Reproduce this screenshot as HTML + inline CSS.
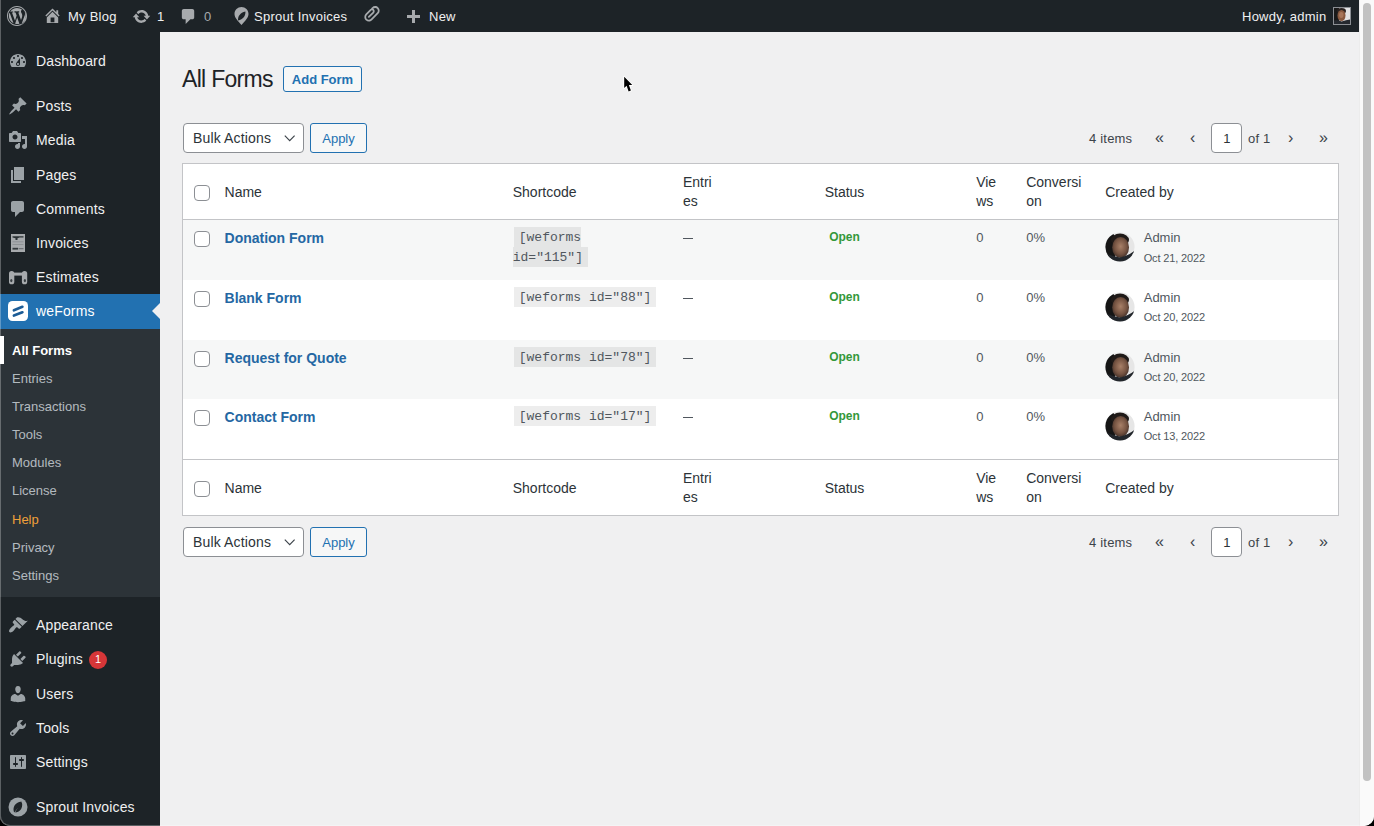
<!DOCTYPE html>
<html><head><meta charset="utf-8">
<style>
*{box-sizing:border-box;margin:0;padding:0}
html,body{width:1374px;height:826px;overflow:hidden;background:#000}
body{font-family:"Liberation Sans",sans-serif;font-size:13px;color:#3c434a;position:relative}
#win{position:absolute;left:0;top:0;width:1374px;height:826px;background:#f0f0f1;border-radius:0 0 10px 10px;overflow:hidden}
#bar{position:absolute;left:0;top:0;width:1359px;height:32px;background:#1d2327;color:#f0f0f1}
#bar .t{position:absolute;top:1px;line-height:32px;font-size:13px;color:#f0f0f1;white-space:nowrap;letter-spacing:.25px}
#bar .g{color:#a7aaad}
#bar svg{position:absolute;fill:#a7aaad}
#side{position:absolute;left:0;top:32px;width:160px;height:794px;background:#1d2327}
#sub{position:absolute;left:0;top:297px;width:160px;height:268px;background:#2c3338}
.mi{position:absolute;left:36px;font-size:14px;line-height:34px;height:34px;color:#f0f0f1;white-space:nowrap;letter-spacing:.15px}
.si{position:absolute;left:12px;font-size:13px;line-height:28px;height:28px;color:rgba(240,246,252,.7);white-space:nowrap}
#side svg{position:absolute;fill:rgba(240,246,252,.6)}
#edge{position:absolute;left:0;top:0;width:1374px;height:826px;border-left:1px solid rgba(255,255,255,.28);border-bottom:1px solid rgba(255,255,255,.28);border-radius:0 0 10px 10px;z-index:4;pointer-events:none}
#wbar{position:absolute;left:0;top:336px;width:4px;height:28px;background:#fff;z-index:5}
#sb{position:absolute;left:1359px;top:0;width:15px;height:826px;background:#fafafa;border-left:1px solid #ececec}
#thumb{position:absolute;left:1363px;top:3px;width:8px;height:778px;border-radius:4px;background:#c2c2c2}

#main{position:absolute;left:160px;top:32px;width:1199px;height:794px}
h1{position:absolute;left:22px;top:32px;font-size:23px;font-weight:400;line-height:30px;color:#1d2327;letter-spacing:-0.7px;white-space:nowrap}
.btn2{position:absolute;height:26px;border:1px solid #2271b1;border-radius:3px;background:#f6f7f7;color:#2271b1;font-size:13px;font-weight:600;line-height:26px;text-align:center}
.sel{position:absolute;width:121px;height:30px;border:1px solid #8c8f94;border-radius:4px;background:#fff;color:#2c3338;font-size:14px;line-height:28px;padding-left:9px;white-space:nowrap;letter-spacing:.15px}
.sel svg{position:absolute;right:7px;top:7.5px}
.apply{position:absolute;width:57px;height:30px;border:1px solid #2271b1;border-radius:3px;background:#f6f7f7;color:#2271b1;font-size:13px;line-height:30px;text-align:center}
.pg{position:absolute;white-space:nowrap;font-size:13px;color:#3c434a;line-height:32px;letter-spacing:.2px}
.pg .a{position:absolute;top:0;font-size:16px;line-height:30px;color:#3c434a}
.pg .box{position:absolute;top:0;width:31px;height:30px;border:1px solid #8c8f94;border-radius:4px;background:#fff;text-align:center;font-size:13px;line-height:29px;color:#2c3338;padding-left:1px}
table{position:absolute;left:22px;border-collapse:collapse;table-layout:fixed;background:#fff;border:1px solid #c3c4c7;font-size:13px}
th,td{text-align:left;vertical-align:top;padding:8px 10px}
th{font-size:14px;font-weight:400;color:#2c3338;line-height:18.5px;vertical-align:middle;padding:9px 10px 7px}
thead th{border-bottom:1px solid #c3c4c7}
tfoot th{border-top:1px solid #c3c4c7}
tbody tr:nth-child(odd){background:#f6f7f7}
.cb{display:inline-block;width:16px;height:16px;border:1px solid #8c8f94;border-radius:4px;background:#fff}

.nm{color:#2467a3;font-weight:600;font-size:14px;line-height:20px}
code{font-family:"Liberation Mono",monospace;font-size:13px;background:rgba(0,0,0,.07);padding:3px 5px 2px;margin:0 1px;line-height:20px;color:#50575e;vertical-align:top}
td{font-size:13px;line-height:20px;color:#50575e}
.open{color:#33983a;font-size:12px;font-weight:700;position:relative;top:-1px}
td:last-child{position:relative}
.av{position:absolute;left:10px;top:12px}
.who{position:absolute;left:48.5px;top:9px;font-size:13px;color:#50575e;line-height:18px}
.dt{position:absolute;left:48.5px;top:30.5px;font-size:11px;color:#50575e;line-height:14px;letter-spacing:-.15px}
.dash{display:inline-block;vertical-align:top;margin-top:10px;width:10px;height:1px;background:#50575e}
</style></head><body>
<div id="win">
<div id="bar">
  <svg style="left:7px;top:6px" width="20" height="20" viewBox="0 0 20 20"><path d="M20 10c0-5.52-4.48-10-10-10S0 4.48 0 10s4.48 10 10 10 10-4.48 10-10zM10 1.01c4.97 0 8.99 4.02 8.99 8.99s-4.02 8.99-8.99 8.99S1.01 14.97 1.01 10 5.03 1.01 10 1.01zM8.01 14.82L4.96 6.61c.49-.03 1.05-.08 1.05-.08.43-.05.38-1.01-.06-.99 0 0-1.29.1-2.13.1-.15 0-.33 0-.52-.01 1.44-2.17 3.9-3.6 6.7-3.6 2.09 0 3.99.79 5.41 2.09-.6-.08-1.450.35-1.45 1.42 0 .66.38 1.22.79 1.88.31.54.5 1.22.5 2.21 0 1.34-1.27 4.48-1.27 4.48l-2.71-7.5c.48-.03.75-.16.75-.16.43-.05.38-1.1-.05-1.08 0 0-1.3.11-2.14.11-.78 0-2.11-.11-2.11-.11-.43-.02-.48 1.06-.05 1.08l.84.08 1.12 3.04zm6.830 2.41l2.7-7.37s.48-1.21.48-1.94c0-.62-.05-1.45-.28-2.14.71 1.33 1.11 2.86 1.11 4.48 0 3.68-2.04 6.85-5.01 8.48zM2.68 6.77L6.5 17.25c-2.76-1.37-4.67-4.18-4.67-7.47 0-1.16.2-2.27.85-3.01zm7.45 4.74l2.28 6.15c-.72.23-1.450.36-2.22.36-.69 0-1.43-.1-2.08-.29z"/></svg>
  <svg style="left:42.5px;top:6px" width="19" height="19" viewBox="0 0 20 20"><path d="M16 8.5l1.53 1.53-1.06 1.06L10 4.62l-6.47 6.47-1.06-1.06L10 2.5l4 4v-2h2v4zm-6-2.46l6 5.99V18H4v-5.97zM12 17v-5H8v5h4z"/></svg>
  <span class="t" style="left:68px">My Blog</span>
  <svg style="left:132px;top:7px" width="19" height="19" viewBox="0 0 20 20"><path d="M10.2 3.28c3.53 0 6.43 2.61 6.92 6h2.08l-3.5 4-3.5-4h2.32c-.45-1.970-2.21-3.45-4.32-3.45-1.45 0-2.73.71-3.54 1.78L4.95 5.66C6.23 4.2 8.11 3.28 10.2 3.28zm-.4 13.44c-3.52 0-6.43-2.61-6.92-6H.8l3.5-4c1.17 1.33 2.33 2.67 3.5 4H5.48c.45 1.97 2.21 3.45 4.32 3.450 1.45 0 2.73-.71 3.54-1.78l1.71 1.95c-1.28 1.46-3.15 2.38-5.25 2.38z"/></svg>
  <span class="t" style="left:157px">1</span>
  <svg style="left:179px;top:7px" width="19" height="19" viewBox="0 0 20 20"><path d="M5 2h9c1.1 0 2 .9 2 2v7c0 1.1-.9 2-2 2h-2l-5 5v-5H5c-1.1 0-2-.9-2-2V4c0-1.1.9-2 2-2z"/></svg>
  <span class="t g" style="left:204px">0</span>
  <svg style="left:234px;top:7px" width="15" height="18" viewBox="0 0 14 18"><path fill-rule="evenodd" d="M7 0C3.1 0 0 3 0 6.9C0 10.6 3.4 13.6 7 18C10.6 13.6 14 10.6 14 6.9C14 3 10.9 0 7 0ZM3.6 13.4C3.2 9.2 5.6 5.6 10.9 4.4C11.3 8.8 8.6 12.3 3.6 13.4ZM4.3 12.6L8.8 7.2L4.7 11.9Z"/></svg>
  <span class="t" style="left:254px">Sprout Invoices</span>
  <svg style="left:363px;top:5px" width="18" height="18" viewBox="0 0 20 20"><path d="M17.05 2.7c1.930 1.94 1.93 5.13 0 7.07L10 16.84c-1.88 1.89-4.91 1.93-6.86.15-.06-.05-.13-.09-.19-.15-1.93-1.94-1.93-5.12 0-7.07l4.94-4.95c.91-.92 2.28-1.1 3.39-.58.3.15.59.33.83.58 1.17 1.17 1.17 3.07 0 4.24l-4.93 4.95c-.39.39-1.02.39-1.410 0s-.39-1.02 0-1.41l4.93-4.95c.39-.39.39-1.02 0-1.41-.38-.39-1.02-.39-1.4 0l-4.94 4.95c-.91.92-1.1 2.29-.57 3.4.14.3.32.59.57.84s.54.43.84.57c1.11.53 2.47.35 3.39-.57l7.05-7.07c1.16-1.17 1.16-3.08 0-4.25-1.17-1.17-3.08-1.170-4.25 0l-.7.7c-.39.39-1.02.39-1.41 0s-.39-1.02 0-1.41l.7-.7c1.94-1.94 5.11-1.94 7.05 0z"/></svg>
  <svg style="left:406px;top:9px" width="15" height="15" viewBox="0 0 15 15"><path d="M6 1h3v5h5v3H9v5H6V9H1V6h5z"/></svg>
  <span class="t" style="left:429px">New</span>
  <span class="t" style="left:1242px">Howdy, admin</span>
  <svg style="position:absolute;left:1333px;top:7px" width="18" height="18" viewBox="0 0 18 18"><rect x="0.5" y="0.5" width="17" height="17" fill="#e4e4e5" stroke="#8c8f94"/><rect x="1" y="1" width="5" height="16" fill="#1a1a1a"/><ellipse cx="8.5" cy="4" rx="4.5" ry="3" fill="#2a2220"/><ellipse cx="8.5" cy="8.5" rx="4" ry="5.5" fill="#8a5a40"/><ellipse cx="8.3" cy="8" rx="2.2" ry="3" fill="#a8765a"/><path d="M1 13.5Q5 12.5 8.5 14.5Q13 13 17 12.5V17H1Z" fill="#25292f"/></svg>
</div>
<div id="side">
  <svg style="left:8px;top:19px" width="20" height="20" viewBox="0 0 20 20"><path d="M3.76 16h12.48c1.1-1.37 1.76-3.11 1.76-5 0-4.42-3.58-8-8-8s-8 3.58-8 8c0 1.89.66 3.63 1.76 5zM10 4c.55 0 1 .45 1 1s-.45 1-1 1-1-.45-1-1 .45-1 1-1zM6 6c.55 0 1 .45 1 1s-.45 1-1 1-1-.45-1-1 .45-1 1-1zm8 0c.55 0 1 .45 1 1s-.45 1-1 1-1-.45-1-1 .45-1 1-1zm-5.37 5.55L12 7v6c0 1.1-.9 2-2 2s-2-.9-2-2c0-.57.24-1.08.63-1.45zM4 10c.55 0 1 .45 1 1s-.45 1-1 1-1-.45-1-1 .45-1 1-1zm12 0c.55 0 1 .45 1 1s-.45 1-1 1-1-.45-1-1 .45-1 1-1zm-5 3c0-.55-.45-1-1-1s-1 .45-1 1 .45 1 1 1 1-.45 1-1z"/></svg>
  <span class="mi" style="top:12px">Dashboard</span>
  <svg style="left:8px;top:64px" width="20" height="20" viewBox="0 0 20 20"><path d="M10.44 3.02l1.82-1.82 6.36 6.35-1.83 1.82c-1.05-.68-2.48-.57-3.41.36l-.75.75c-.92.93-1.04 2.35-.35 3.41l-1.83 1.82-2.41-2.41-2.8 2.79c-.42.42-3.38 2.71-3.8 2.29s1.86-3.39 2.28-3.81l2.79-2.79L4.1 9.36l1.83-1.82c1.05.69 2.48.57 3.4-.36l.75-.75c.93-.92 1.05-2.35.36-3.41z"/></svg>
  <span class="mi" style="top:57px">Posts</span>
  <svg style="left:8px;top:98px" width="20" height="20" viewBox="0 0 20 20"><path d="M13 11V4c0-.55-.45-1-1-1h-1.67L9 1H5L3.67 3H2c-.55 0-1 .45-1 1v7c0 .55.45 1 1 1h10c.55 0 1-.45 1-1zM7 4.5c1.38 0 2.5 1.12 2.5 2.5S8.38 9.5 7 9.5 4.5 8.38 4.5 7 5.62 4.5 7 4.5zM14 6h5v10.5c0 1.38-1.12 2.5-2.5 2.5S14 17.88 14 16.5s1.12-2.5 2.5-2.5c.17 0 .34.02.5.05V9h-3V6zm-4 8.05V13h2v3.5c0 1.38-1.12 2.5-2.5 2.5S7 17.88 7 16.5 8.12 14 9.5 14c.17 0 .34.02.5.05z"/></svg>
  <span class="mi" style="top:91px">Media</span>
  <svg style="left:8px;top:133px" width="20" height="20" viewBox="0 0 20 20"><path d="M6 15V2h10v13H6zm-1 1h8v2H3V5h2v11z"/></svg>
  <span class="mi" style="top:126px">Pages</span>
  <svg style="left:8px;top:167px" width="20" height="20" viewBox="0 0 20 20"><path d="M5 2h9c1.1 0 2 .9 2 2v7c0 1.1-.9 2-2 2h-2l-5 5v-5H5c-1.1 0-2-.9-2-2V4c0-1.1.9-2 2-2z"/></svg>
  <span class="mi" style="top:160px">Comments</span>
  <svg style="left:0;top:200px" width="32" height="24" viewBox="0 0 32 24"><rect x="11" y="2" width="14" height="18" fill="#a7aaad"/><path d="M12.5 4.2H23.5V5.6H19.5L17.5 6.2V8H15.5V6.2L12.5 5.6Z" fill="#1d2327" opacity=".9"/><rect x="12.5" y="15.8" width="5.5" height="1.8" fill="#1d2327" opacity=".85"/><rect x="18.5" y="16.2" width="5" height="1" fill="#1d2327" opacity=".5"/><rect x="12.5" y="9.5" width="11" height=".7" fill="#1d2327" opacity=".25"/><rect x="12.5" y="12" width="11" height=".7" fill="#1d2327" opacity=".25"/></svg>
  <span class="mi" style="top:194px">Invoices</span>
  <svg style="left:0;top:234px" width="32" height="24" viewBox="0 0 32 24"><rect x="9" y="5" width="5.3" height="13.3" rx="2.6" fill="#a7aaad"/><rect x="21.9" y="5" width="5.3" height="13.3" rx="2.6" fill="#a7aaad"/><rect x="13" y="6.6" width="10" height="3" fill="#a7aaad"/><ellipse cx="11.3" cy="14.6" rx="1.1" ry="1.6" fill="#1d2327" opacity=".8"/><ellipse cx="24.9" cy="14.6" rx="1.1" ry="1.6" fill="#1d2327" opacity=".8"/></svg>
  <span class="mi" style="top:228px">Estimates</span>
  <div style="position:absolute;left:0;top:262px;width:160px;height:35px;background:#2271b1"></div>
  <div style="position:absolute;left:152px;top:271px;width:0;height:0;border-top:8px solid transparent;border-bottom:8px solid transparent;border-right:8px solid #f0f0f1"></div>
  <svg style="position:absolute;left:8px;top:269px" width="20" height="20" viewBox="0 0 20 20"><rect x="0" y="0" width="20" height="20" rx="4.5" fill="#fff"/><path d="M5.9 9.3L14.4 5.8M5.9 14.5L14.4 11.3" stroke="#1c5c96" stroke-width="2.7" stroke-linecap="round" fill="none"/></svg>
  <span class="mi" style="top:262px;color:#fff">weForms</span>
  <div id="sub">
  
  <span class="si" style="top:8px;color:#fff;font-weight:600">All Forms</span>
  <span class="si" style="top:36px">Entries</span>
  <span class="si" style="top:64px">Transactions</span>
  <span class="si" style="top:92px">Tools</span>
  <span class="si" style="top:120px">Modules</span>
  <span class="si" style="top:148px">License</span>
  <span class="si" style="top:177px;color:#f0a03a">Help</span>
  <span class="si" style="top:205px">Privacy</span>
  <span class="si" style="top:233px">Settings</span>
</div>
  <svg style="left:8px;top:583px" width="20" height="20" viewBox="0 0 20 20"><path d="M14.48 11.06L7.41 3.99l1.5-1.5c.5-.56 2.3-.47 3.51.32 1.21.8 1.43 1.28 2.91 2.1 1.18.64 2.45 1.26 4.45.85zm-.71.71L6.7 4.7 4.93 6.47c-.39.39-.39 1.02 0 1.41l1.06 1.060c.39.39.39 1.03 0 1.42-.6.6-1.43 1.11-2.21 1.69-.35.26-.7.53-1.01.84C1.43 14.23.4 16.08 1.4 17.07c.99 1 2.84-.03 4.18-1.36.31-.31.58-.66.85-1.02.57-.78 1.08-1.61 1.69-2.21.39-.39 1.02-.39 1.41 0l1.06 1.06c.39.39 1.02.39 1.41 0z"/></svg>
  <span class="mi" style="top:576px">Appearance</span>
  <svg style="left:8px;top:617px" width="20" height="20" viewBox="0 0 20 20"><path d="M13.11 4.36L9.87 7.6 8 5.73l3.24-3.24c.35-.34 1.05-.2 1.56.32.52.51.66 1.21.31 1.55zm-8 1.77l.91-1.12 9.010 9.01-1.19.84c-.71.71-2.63 1.16-3.82 1.16H6.14L4.9 17.26c-.59.59-1.54.59-2.12 0-.59-.58-.59-1.53 0-2.12l1.24-1.24v-3.88c0-1.13.4-3.19 1.09-3.89zm7.26 3.97l3.24-3.24c.34-.35 1.04-.21 1.55.31.52.51.66 1.21.31 1.55l-3.24 3.25z"/></svg>
  <span class="mi" style="top:610px">Plugins</span>
  <span style="position:absolute;left:89px;top:619px;width:18px;height:18px;border-radius:9px;background:#d63638;color:#fff;font-size:11px;font-weight:400;line-height:17px;text-align:center">1</span>
  <svg style="left:8px;top:652px" width="20" height="20" viewBox="0 0 20 20"><path d="M10 9.25c-2.27 0-2.73-3.44-2.73-3.44C7 4.02 7.82 2 9.97 2c2.16 0 2.98 2.02 2.71 3.81 0 0-.41 3.44-2.68 3.44zm0 2.57L12.72 10c2.39 0 4.52 2.33 4.52 4.53v2.49s-3.65 1.13-7.24 1.13c-3.65 0-7.24-1.13-7.24-1.13v-2.49c0-2.25 1.94-4.48 4.47-4.48z"/></svg>
  <span class="mi" style="top:645px">Users</span>
  <svg style="left:8px;top:686px" width="20" height="20" viewBox="0 0 20 20"><path d="M16.68 9.77c-1.34 1.34-3.3 1.67-4.950.99l-5.41 6.52c-.99.99-2.59.99-3.58 0s-.99-2.59 0-3.57l6.52-5.42c-.68-1.65-.35-3.61.99-4.95 1.28-1.28 3.12-1.62 4.72-1.06l-2.89 2.89 2.82 2.82 2.86-2.87c.53 1.58.18 3.39-1.08 4.65zM3.81 16.21c.4.39 1.04.39 1.43 0 .4-.4.4-1.04 0-1.43-.39-.4-1.03-.4-1.43 0-.39.39-.39 1.03 0 1.43z"/></svg>
  <span class="mi" style="top:679px">Tools</span>
  <svg style="left:8px;top:720px" width="20" height="20" viewBox="0 0 20 20"><path d="M18 16V4c0-.55-.45-1-1-1H3c-.55 0-1 .45-1 1v12c0 .55.45 1 1 1h14c.55 0 1-.45 1-1zM8 11h1c.55 0 1 .45 1 1s-.45 1-1 1H8v1.5c0 .28-.22.5-.5.5s-.5-.22-.5-.5V13H6c-.55 0-1-.45-1-1s.45-1 1-1h1V5.5c0-.28.22-.5.5-.5s.5.22.5.5V11zm5-2h-1c-.55 0-1-.45-1-1s.45-1 1-1h1V5.5c0-.28.22-.5.5-.5s.5.22.5.5V7h1c.55 0 1 .45 1 1s-.45 1-1 1h-1v5.5c0 .28-.22.5-.5.5s-.5-.22-.5-.5V9z"/></svg>
  <span class="mi" style="top:713px">Settings</span>
  <svg style="left:8px;top:764px" width="20" height="22" viewBox="0 0 20 20"><circle cx="10" cy="10" r="9.5"/><path d="M14 4.5C9 5 5.500 8 5.500 12.500c0 1.200.300 2.200.8 3 .5-.5 1-1.300 1.500-2 .7-1 1.500-2 2.200-2.500-.6.7-1.400 1.700-2 2.700-.4.700-.7 1.300-.8 1.800 4.500-.2 7-3.500 7-8 0-1.100-.3-2.200-1.200-3z" fill="#1d2327"/></svg>
  <span class="mi" style="top:758px">Sprout Invoices</span>
</div>
<div id="main">
  <h1>All Forms</h1>
  <div class="btn2" style="left:123px;top:34px;width:79px">Add Form</div>
  <div class="sel" style="left:23px;top:91px">Bulk Actions<svg width="13" height="13" viewBox="0 0 13 13"><path d="M1.8 3.6l4.9 5 4.9-5" stroke="#3c434a" stroke-width="1.15" fill="none"/></svg></div>
  <div class="apply" style="left:150px;top:91px">Apply</div>
  <div class="pg" style="left:0;top:91px;width:1199px">
    <span style="position:absolute;left:929px">4 items</span>
    <span class="a" style="left:995px">&laquo;</span>
    <span class="a" style="left:1030px">&lsaquo;</span>
    <span class="box" style="left:1051px">1</span>
    <span style="position:absolute;left:1088px">of 1</span>
    <span class="a" style="left:1128px">&rsaquo;</span>
    <span class="a" style="left:1159px">&raquo;</span>
  </div>
  <div class="pg" style="left:0;top:495px;width:1199px">
    <span style="position:absolute;left:929px">4 items</span>
    <span class="a" style="left:995px">&laquo;</span>
    <span class="a" style="left:1030px">&lsaquo;</span>
    <span class="box" style="left:1051px">1</span>
    <span style="position:absolute;left:1088px">of 1</span>
    <span class="a" style="left:1128px">&rsaquo;</span>
    <span class="a" style="left:1159px">&raquo;</span>
  </div>
  <div class="sel" style="left:23px;top:495px">Bulk Actions<svg width="13" height="13" viewBox="0 0 13 13"><path d="M1.8 3.6l4.9 5 4.9-5" stroke="#3c434a" stroke-width="1.15" fill="none"/></svg></div>
  <div class="apply" style="left:150px;top:495px">Apply</div>
  <table style="top:131px;width:1157px">
    <colgroup><col style="width:32px"><col style="width:288px"><col style="width:170px"><col style="width:50px"><col style="width:243px"><col style="width:50px"><col style="width:79px"><col style="width:243px"></colgroup>
    <thead><tr style="height:56px"><th style="padding:21px 0 0 11px;vertical-align:top"><span class="cb" style="display:block"></span></th><th>Name</th><th>Shortcode</th><th><span style="position:relative;top:-1px">Entri<br>es</span></th><th style="text-align:center">Status</th><th><span style="position:relative;top:-1px">Vie<br>ws</span></th><th><span style="position:relative;top:-1px">Conversi<br>on</span></th><th>Created by</th></tr></thead>
    <tbody>
    <tr style="height:60px"><td style="padding:11px 0 0 11px"><span class="cb"></span></td><td><a class="nm">Donation Form</a></td><td><code>[weforms id="115"]</code></td><td><span class="dash"></span></td><td style="text-align:center"><b class="open">Open</b></td><td>0</td><td>0%</td><td><svg class="av" width="30" height="30" viewBox="0 0 30 30"><defs><clipPath id="cc0"><circle cx="15" cy="15" r="14.6"/></clipPath><radialGradient id="fg0" cx="0.5" cy="0.45" r="0.6"><stop offset="0" stop-color="#a88068"/><stop offset="0.6" stop-color="#765442"/><stop offset="1" stop-color="#3a2a24"/></radialGradient></defs><g clip-path="url(#cc0)"><rect width="30" height="30" fill="#e6e6e6"/><ellipse cx="3" cy="15" rx="8.5" ry="17" fill="#151515"/><ellipse cx="15" cy="8" rx="9" ry="6.5" fill="#1f1a18"/><ellipse cx="15.6" cy="15.5" rx="8.4" ry="10.5" fill="url(#fg0)"/><path d="M0 21Q8 24.5 15 25.5Q23 24 30 18.5V30H0Z" fill="#22262b"/></g></svg><span class="who">Admin</span><span class="dt">Oct 21, 2022</span></td></tr>
<tr style="height:60px"><td style="padding:11px 0 0 11px"><span class="cb"></span></td><td><a class="nm">Blank Form</a></td><td><code>[weforms id="88"]</code></td><td><span class="dash"></span></td><td style="text-align:center"><b class="open">Open</b></td><td>0</td><td>0%</td><td><svg class="av" width="30" height="30" viewBox="0 0 30 30"><defs><clipPath id="cc1"><circle cx="15" cy="15" r="14.6"/></clipPath><radialGradient id="fg1" cx="0.5" cy="0.45" r="0.6"><stop offset="0" stop-color="#a88068"/><stop offset="0.6" stop-color="#765442"/><stop offset="1" stop-color="#3a2a24"/></radialGradient></defs><g clip-path="url(#cc1)"><rect width="30" height="30" fill="#e6e6e6"/><ellipse cx="3" cy="15" rx="8.5" ry="17" fill="#151515"/><ellipse cx="15" cy="8" rx="9" ry="6.5" fill="#1f1a18"/><ellipse cx="15.6" cy="15.5" rx="8.4" ry="10.5" fill="url(#fg1)"/><path d="M0 21Q8 24.5 15 25.5Q23 24 30 18.5V30H0Z" fill="#22262b"/></g></svg><span class="who">Admin</span><span class="dt">Oct 20, 2022</span></td></tr>
<tr style="height:59px"><td style="padding:11px 0 0 11px"><span class="cb"></span></td><td><a class="nm">Request for Quote</a></td><td><code>[weforms id="78"]</code></td><td><span class="dash"></span></td><td style="text-align:center"><b class="open">Open</b></td><td>0</td><td>0%</td><td><svg class="av" width="30" height="30" viewBox="0 0 30 30"><defs><clipPath id="cc2"><circle cx="15" cy="15" r="14.6"/></clipPath><radialGradient id="fg2" cx="0.5" cy="0.45" r="0.6"><stop offset="0" stop-color="#a88068"/><stop offset="0.6" stop-color="#765442"/><stop offset="1" stop-color="#3a2a24"/></radialGradient></defs><g clip-path="url(#cc2)"><rect width="30" height="30" fill="#e6e6e6"/><ellipse cx="3" cy="15" rx="8.5" ry="17" fill="#151515"/><ellipse cx="15" cy="8" rx="9" ry="6.5" fill="#1f1a18"/><ellipse cx="15.6" cy="15.5" rx="8.4" ry="10.5" fill="url(#fg2)"/><path d="M0 21Q8 24.5 15 25.5Q23 24 30 18.5V30H0Z" fill="#22262b"/></g></svg><span class="who">Admin</span><span class="dt">Oct 20, 2022</span></td></tr>
<tr style="height:61px"><td style="padding:11px 0 0 11px"><span class="cb"></span></td><td><a class="nm">Contact Form</a></td><td><code>[weforms id="17"]</code></td><td><span class="dash"></span></td><td style="text-align:center"><b class="open">Open</b></td><td>0</td><td>0%</td><td><svg class="av" width="30" height="30" viewBox="0 0 30 30"><defs><clipPath id="cc3"><circle cx="15" cy="15" r="14.6"/></clipPath><radialGradient id="fg3" cx="0.5" cy="0.45" r="0.6"><stop offset="0" stop-color="#a88068"/><stop offset="0.6" stop-color="#765442"/><stop offset="1" stop-color="#3a2a24"/></radialGradient></defs><g clip-path="url(#cc3)"><rect width="30" height="30" fill="#e6e6e6"/><ellipse cx="3" cy="15" rx="8.5" ry="17" fill="#151515"/><ellipse cx="15" cy="8" rx="9" ry="6.5" fill="#1f1a18"/><ellipse cx="15.6" cy="15.5" rx="8.4" ry="10.5" fill="url(#fg3)"/><path d="M0 21Q8 24.5 15 25.5Q23 24 30 18.5V30H0Z" fill="#22262b"/></g></svg><span class="who">Admin</span><span class="dt">Oct 13, 2022</span></td></tr>
    </tbody>
    <tfoot><tr style="height:56px"><th style="padding:21px 0 0 11px;vertical-align:top"><span class="cb" style="display:block"></span></th><th>Name</th><th>Shortcode</th><th><span style="position:relative;top:-1px">Entri<br>es</span></th><th style="text-align:center">Status</th><th><span style="position:relative;top:-1px">Vie<br>ws</span></th><th><span style="position:relative;top:-1px">Conversi<br>on</span></th><th>Created by</th></tr></tfoot>
  </table>
</div>
<svg style="position:absolute;left:620px;top:73px" width="18" height="24" viewBox="0 0 18 24"><path d="M4.2 3.8V15L6.6 12.8L8.6 18.4L10.9 17.5L8.9 12.1H12.3Z" fill="#fff" stroke="#fff" stroke-width="1.8" stroke-linejoin="round"/><path d="M4.2 3.8V15L6.6 12.8L8.6 18.4L10.9 17.5L8.9 12.1H12.3Z" fill="#000"/></svg>
<div id="sb"></div><div id="thumb"></div>
<div id="edge"></div><div id="wbar"></div>
</div>
</body></html>
